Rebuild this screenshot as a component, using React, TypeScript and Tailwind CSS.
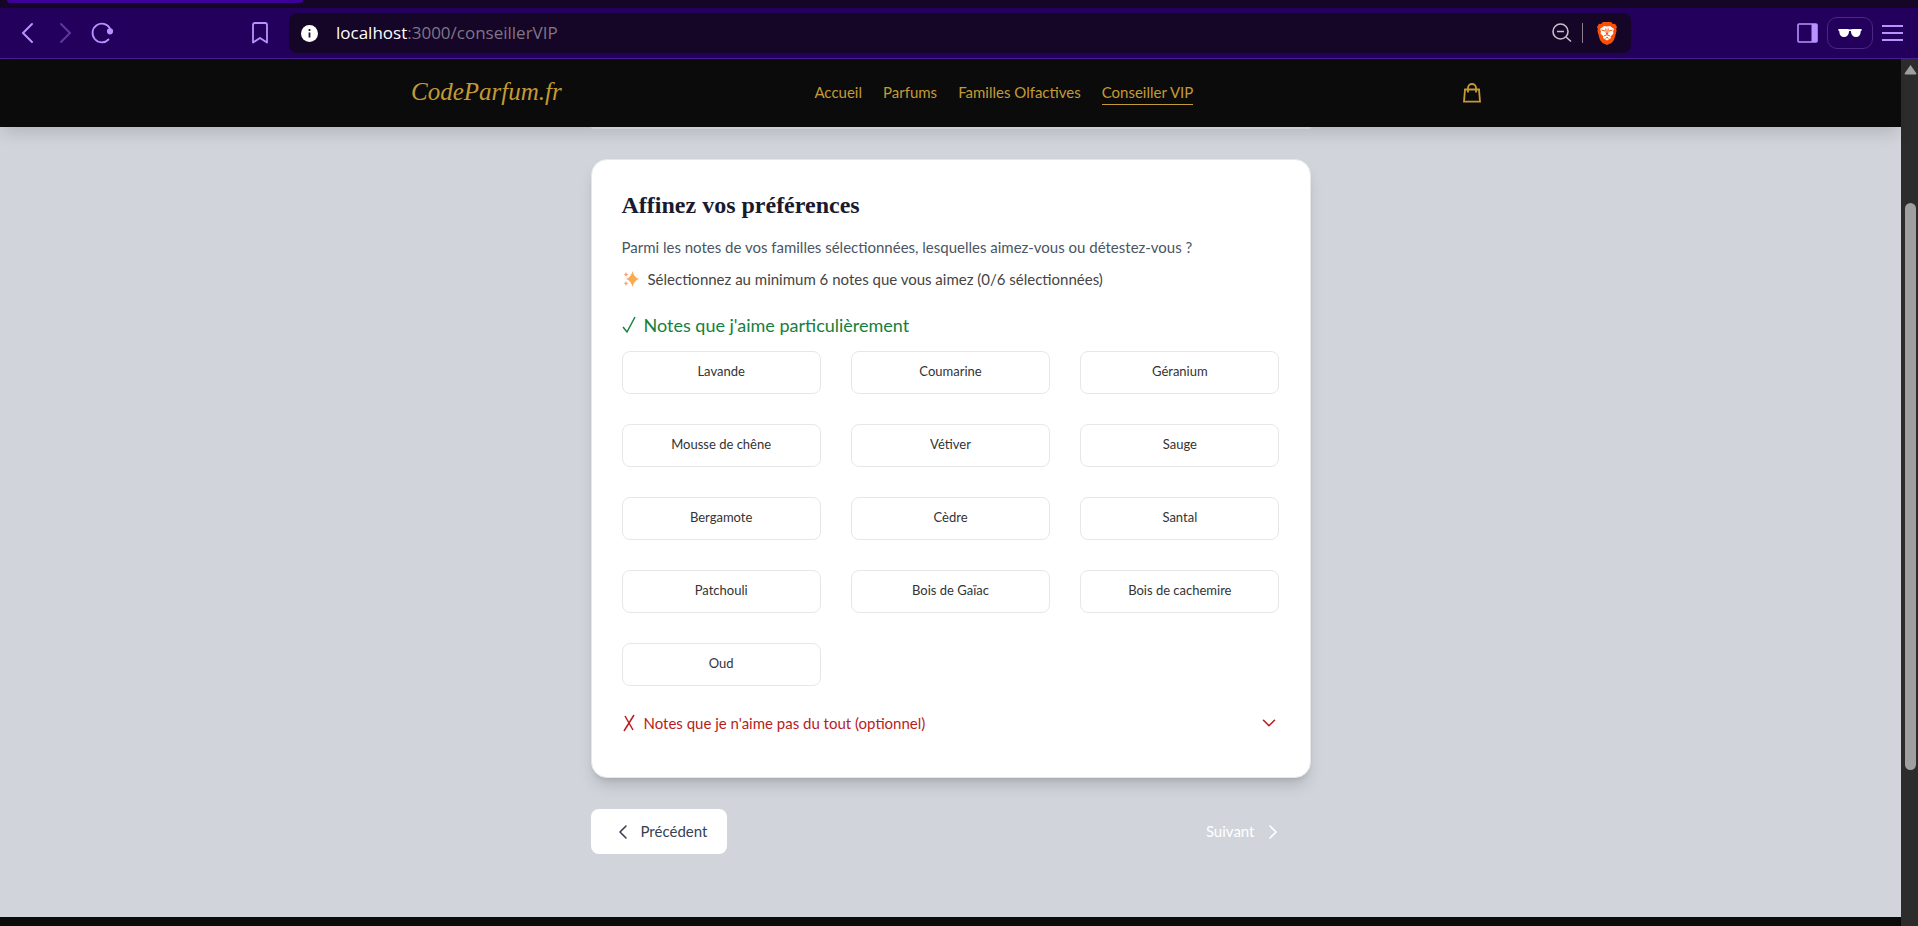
import { ChevronDown, ChevronLeft, ChevronRight } from "lucide-react";

const links = ["Accueil", "Parfums", "Familles Olfactives", "Conseiller VIP"];

const notes = [
  "Lavande",
  "Coumarine",
  "Géranium",
  "Mousse de chêne",
  "Vétiver",
  "Sauge",
  "Bergamote",
  "Cèdre",
  "Santal",
  "Patchouli",
  "Bois de Gaïac",
  "Bois de cachemire",
  "Oud",
];

function BraveLion() {
  return (
    <svg viewBox="0 0 20 23" className="h-[23px] w-5" aria-hidden="true">
      <path d="M6 0h8l2 2 2-.3L20 5l-.8 2 .4 2-2.600 9-2.500 3-4.500 2-4.500-2L3 18 .4 9l.4-2L0 5l2-3.300 2 .3z" fill="#fb4f06" />
      <path d="M7 4l3 .5 3-.5 4 3-1 2.500.5 2-3 3 .5 1.500-4 2.500L6 16l.5-1.500-3-3 .5-2L3 7z" fill="#fff" />
      <path d="M4.500 8l3.500 1M15.500 8L12 9M8.800 6.500l.4 4.500L10 12.500l.8-1.500.4-4.500M7 14l3-1.300 3 1.300M8.500 16.500L10 15.300l1.500 1.200" stroke="#fb4f06" strokeWidth="1" fill="none" />
    </svg>
  );
}

function BrowserBar() {
  return (
    <div className="bg-[#150526]">
      <div className="flex h-2">
        <div className="ml-[7px] h-[3px] w-[296px] rounded-b-md bg-[#3d0099]" />
      </div>
      <div className="flex h-[51px] items-center border-b border-[#46208f] bg-[#22005c] text-[#b594ff]">
        <button aria-label="Retour" className="ml-4 w-6">
          <svg viewBox="0 0 24 24" className="size-6" fill="none" stroke="currentColor" strokeWidth="2" strokeLinecap="round">
            <path d="M16 3L7 12L16 21" />
          </svg>
        </button>
        <button aria-label="Avancer" className="ml-3 w-6 text-[#61369f]">
          <svg viewBox="0 0 24 24" className="size-6" fill="none" stroke="currentColor" strokeWidth="2" strokeLinecap="round">
            <path d="M9 3L18 12L9 21" />
          </svg>
        </button>
        <button aria-label="Actualiser" className="ml-[14px] w-6">
          <svg viewBox="0 0 24 24" className="size-6" fill="none" stroke="currentColor" strokeWidth="1.800" strokeLinecap="round">
            <path d="M20 7.500A9.300 9.300 0 1 0 18.500 18.500" />
            <circle cx="20" cy="10.300" r="2.200" fill="currentColor" />
          </svg>
        </button>
        <button aria-label="Favoris" className="ml-[134px] w-6">
          <svg viewBox="0 0 24 24" className="size-6" fill="none" stroke="currentColor" strokeWidth="1.800" strokeLinejoin="round">
            <path d="M5 4q0-2 2-2h10q2 0 2 2v17.500l-7-4.500-7 4.500z" />
          </svg>
        </button>
        <div className="ml-[17px] flex h-10 w-[1342px] items-center rounded-lg bg-[#150526] pr-[14px] pl-3">
          <svg viewBox="0 0 17 17" className="size-[17px]" aria-hidden="true">
            <circle cx="8.500" cy="8.500" r="8.500" fill="#fff" />
            <path d="M8.500 7.500v5M8.500 4v2" stroke="#22103a" strokeWidth="1.800" />
          </svg>
          <div className="ml-[18px] grow font-['Open_Sans','Noto_Sans',sans-serif] text-[17px] text-[#7f7588]">
            <span className="text-white">localhost</span>:3000/conseillerVIP
          </div>
          <button aria-label="Zoom" className="text-[#c4bfc9]">
            <svg viewBox="0 0 20 20" className="size-5" fill="none" stroke="currentColor" strokeWidth="1.600">
              <circle cx="8.500" cy="8.500" r="7.500" />
              <path d="M14 14l5 4.500M5 8.500h7" />
            </svg>
          </button>
          <div className="mr-[14px] ml-[10px] h-5 w-px bg-[#8a8292]" />
          <BraveLion />
        </div>
        <div className="ml-auto flex items-center pr-[15px]">
          <button aria-label="Panneau latéral">
            <svg viewBox="0 0 21 20" className="h-5 w-[21px]">
              <rect x="1" y="1" width="19" height="18" rx="1" fill="none" stroke="currentColor" strokeWidth="1.600" />
              <path d="M14.500 1H20v18h-5.500z" fill="currentColor" />
            </svg>
          </button>
          <button aria-label="Navigation privée" className="ml-[9px] flex h-8 w-[46px] items-center justify-center rounded-[10px] border border-[#4c2783]">
            <svg viewBox="0 0 24 10" className="h-[10px] w-6" fill="#fff">
              <path d="M.5 1h9l2.500.6L14.500 1h9l.3 1.500-1 .5Q22.500 9 18 9 13.500 9 12.800 3h-1.600Q10.500 9 6 9 1.500 9 1.200 3l-1-.5z" />
            </svg>
          </button>
          <button aria-label="Menu" className="ml-[9px]">
            <svg viewBox="0 0 21 18" className="h-[18px] w-[21px]" stroke="currentColor" strokeWidth="2">
              <path d="M0 2h21M0 9h21M0 16h21" />
            </svg>
          </button>
        </div>
      </div>
    </div>
  );
}

function SiteHeader() {
  return (
    <header className="relative flex h-[68px] items-center justify-between bg-[#0b0b0b] px-[411px] pb-0.5 text-[#c49a35] shadow-[0_10px_15px_-3px_rgba(0,0,0,0.13)]">
      <a href="#" className="font-['Liberation_Serif',serif] text-[25px] leading-8 italic">
        CodeParfum.fr
      </a>
      <nav className="flex gap-[21px] text-[15px] leading-6">
        {links.map((label) => (
          <a
            key={label}
            href="#"
            className={label === "Conseiller VIP" ? "border-b border-[#c49a35]" : "border-b border-transparent"}
          >
            {label}
          </a>
        ))}
      </nav>
      <button aria-label="Panier" className="flex w-11 justify-center pt-0.5 pl-2">
        <svg viewBox="0 0 18 20" className="h-5 w-[18px]" fill="none" stroke="currentColor" strokeWidth="1.800">
          <path d="M2 6.500h14l1 12.200H1zM5 9.500V5a4 4 0 0 1 8 0v4.500" />
        </svg>
      </button>
    </header>
  );
}

function Sparkles() {
  return (
    <svg viewBox="0 0 16 16" className="mx-px size-4" aria-hidden="true">
      <path d="M9.500 0q1.500 6.500 6.500 8-5 1.500-6.500 8-1.500-6.500-6.500-8 5-1.500 6.500-8z" fill="#fda94f" />
      <path d="M3 1q.4 2 2.200 2.500Q3.400 4 3 6 2.600 4 .8 3.500 2.600 3 3 1zM3 10q.4 2.100 2.200 2.500-1.800.4-2.200 2.500-.4-2.100-2.200-2.500 1.800-.4 2.200-2.500z" fill="#ff9c70" />
    </svg>
  );
}

function Preferences() {
  return (
    <section className="rounded-2xl border border-[#e5e7eb] bg-white px-[30px] pt-[27px] pb-[38px] shadow-[0_10px_15px_-3px_rgba(0,0,0,0.15),0_4px_6px_-4px_rgba(0,0,0,0.15)]">
      <h2 className="font-['Liberation_Serif',serif] text-2xl leading-9 font-bold text-[#1a1a2e]">Affinez vos préférences</h2>
      <p className="mt-2 text-[15px] leading-8 text-[#4b5563]">
        Parmi les notes de vos familles sélectionnées, lesquelles aimez-vous ou détestez-vous ?
      </p>
      <p className="flex items-center gap-2 text-[15px] leading-8 text-[#444]">
        <Sparkles />
        Sélectionnez au minimum 6 notes que vous aimez (0/6 sélectionnées)
      </p>
      <h3 className="mt-[14px] mb-[10px] flex items-center gap-2 text-lg leading-8 text-[#15803d]">
        <svg viewBox="0 0 14 18" className="h-[18px] w-[14px]" fill="none" stroke="currentColor" strokeWidth="1.500" aria-hidden="true">
          <path d="M1 11l4 5L13 1" />
        </svg>
        Notes que j'aime particulièrement
      </h3>
      <div className="grid grid-cols-3 gap-[30px]">
        {notes.map((note) => (
          <button key={note} className="h-[43px] rounded-lg border border-[#e5e7eb] pb-0.5 text-[13px] text-[#333]">
            {note}
          </button>
        ))}
      </div>
      <button className="mt-[21px] flex w-full items-center gap-2 text-[15px] leading-8 text-[#b91c1c]">
        <svg viewBox="0 0 14 18" className="h-[18px] w-[14px]" fill="none" stroke="currentColor" strokeWidth="1.500" aria-hidden="true">
          <path d="M3 2l8 14M12 1L2 17" />
        </svg>
        Notes que je n'aime pas du tout (optionnel)
        <ChevronDown className="ml-auto size-[22px]" strokeWidth={1.7} />
      </button>
    </section>
  );
}

function Scrollbar() {
  return (
    <div className="w-[17px] shrink-0 bg-[#2c2c2c]" aria-hidden="true">
      <svg viewBox="0 0 17 16" className="h-4 w-[17px]">
        <path d="M9.500 6l6 8.500q0 1-1 1H5q-1.500 0-1.500-1z" fill="#9f9f9f" />
      </svg>
      <div className="mt-32 ml-1 h-[567px] w-[11px] rounded-full bg-[#9f9f9f]" />
    </div>
  );
}

export default function App() {
  return (
    <div className="flex min-h-screen flex-col font-['Lato',sans-serif]">
      <BrowserBar />
      <div className="flex grow">
        <div className="flex grow flex-col bg-[#d1d5db]">
          <SiteHeader />
          <main className="mx-auto w-[720px] max-w-full grow">
            <div className="mb-[30px] h-[2px] rounded-b-2xl bg-[#e5e7eb]" />
            <Preferences />
            <div className="mt-[31px] flex justify-between text-[15px]">
              <button className="flex h-[45px] items-center gap-1.5 rounded-lg bg-white px-5 text-[#374151]">
                <ChevronLeft className="size-6" strokeWidth={1.6} />
                Précédent
              </button>
              <button className="flex h-[45px] items-center gap-1.5 px-[26px] text-white">
                Suivant
                <ChevronRight className="size-6" strokeWidth={1.6} />
              </button>
            </div>
          </main>
          <footer className="h-[9px] bg-[#0b0b0b]" />
        </div>
        <Scrollbar />
      </div>
    </div>
  );
}
